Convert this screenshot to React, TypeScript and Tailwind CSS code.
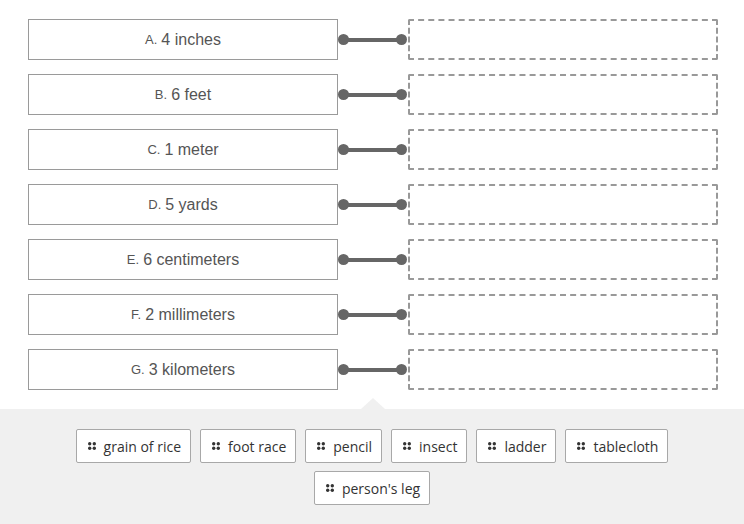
const prompts = [
  { letter: "A.", text: "4 inches" },
  { letter: "B.", text: "6 feet" },
  { letter: "C.", text: "1 meter" },
  { letter: "D.", text: "5 yards" },
  { letter: "E.", text: "6 centimeters" },
  { letter: "F.", text: "2 millimeters" },
  { letter: "G.", text: "3 kilometers" },
];

const choices = [
  "grain of rice",
  "foot race",
  "pencil",
  "insect",
  "ladder",
  "tablecloth",
  "person's leg",
];

function Grip() {
  return (
    <svg width="8" height="8" viewBox="0 0 8 8" className="shrink-0">
      <circle cx="1.7" cy="1.7" r="1.7" fill="#333" />
      <circle cx="6.3" cy="1.7" r="1.7" fill="#333" />
      <circle cx="1.7" cy="6.3" r="1.7" fill="#333" />
      <circle cx="6.3" cy="6.3" r="1.7" fill="#333" />
    </svg>
  );
}

function Connector() {
  return (
    <div className="flex w-[70px] items-center">
      <div className="h-[11px] w-[11px] shrink-0 rounded-full bg-[#666]" />
      <div className="-mx-[1px] h-[4px] w-[49px] bg-[#666]" />
      <div className="h-[11px] w-[11px] shrink-0 rounded-full bg-[#666]" />
    </div>
  );
}

export default function App() {
  return (
    <div className="flex min-h-[524px] w-[744px] flex-col bg-white">
      <div className="flex flex-col gap-[14px] pl-[28px] pt-[19px]">
        {prompts.map((p) => (
          <div key={p.letter} className="flex items-center">
            <div
              className="flex h-[41px] w-[310px] items-center justify-center border border-[#9a9a9a] bg-white text-[16px] text-[#555]"
              style={{ fontFamily: '"Liberation Sans", Arial, sans-serif' }}
            >
              <span className="mr-[4px] text-[13px]">{p.letter}</span>
              <span>{p.text}</span>
            </div>
            <Connector />
            <div className="h-[41px] w-[310px] rounded-[2px] border-2 border-dashed border-[#999]" />
          </div>
        ))}
      </div>
      <div className="relative mt-[19px] flex flex-1 flex-wrap content-start justify-center gap-x-[9px] gap-y-[8px] bg-[#f0f0f0] px-[30px] pb-[19px] pt-[20px]">
        <div className="absolute left-[361px] top-[-11px] h-0 w-0 border-x-[12px] border-b-[11px] border-x-transparent border-b-[#f0f0f0]" />
        {choices.map((c) => (
          <div
            key={c}
            className="flex h-[34px] items-center gap-[8px] rounded-[2px] border border-[#a8a8a8] bg-white pl-[11px] pr-[9px] text-[14px] text-[#333]"
            style={{ fontFamily: '"Open Sans", sans-serif' }}
          >
            <Grip />
            <span>{c}</span>
          </div>
        ))}
      </div>
    </div>
  );
}
